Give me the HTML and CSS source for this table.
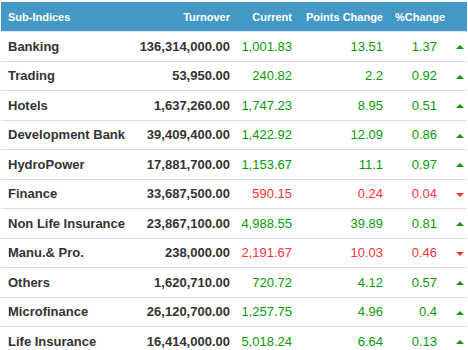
FILE: index.html
```html
<!DOCTYPE html>
<html lang="en">
<head>
    <meta charset="UTF-8">
    <meta name="viewport" content="width=device-width, initial-scale=1.0">
    <title>Sub-Indices</title>
    <link rel="stylesheet" href="styles.css">
</head>
<body>
    <table class="indices">
        <colgroup>
            <col class="col-name">
            <col class="col-turnover">
            <col class="col-current">
            <col class="col-points">
            <col class="col-pct">
            <col class="col-arrow">
        </colgroup>
        <thead>
            <tr>
                <th class="name">Sub-Indices</th>
                <th>Turnover</th>
                <th>Current</th>
                <th>Points Change</th>
                <th class="pct-head">%Change</th>
                <th></th>
            </tr>
        </thead>
        <tbody>
            <tr class="up">
                <td class="name">Banking</td><td class="turnover">136,314,000.00</td>
                <td>1,001.83</td><td>13.51</td><td>1.37</td><td class="arrow"><span></span></td>
            </tr>
            <tr class="up">
                <td class="name">Trading</td><td class="turnover">53,950.00</td>
                <td>240.82</td><td>2.2</td><td>0.92</td><td class="arrow"><span></span></td>
            </tr>
            <tr class="up">
                <td class="name">Hotels</td><td class="turnover">1,637,260.00</td>
                <td>1,747.23</td><td>8.95</td><td>0.51</td><td class="arrow"><span></span></td>
            </tr>
            <tr class="up">
                <td class="name">Development Bank</td><td class="turnover">39,409,400.00</td>
                <td>1,422.92</td><td>12.09</td><td>0.86</td><td class="arrow"><span></span></td>
            </tr>
            <tr class="up">
                <td class="name">HydroPower</td><td class="turnover">17,881,700.00</td>
                <td>1,153.67</td><td>11.1</td><td>0.97</td><td class="arrow"><span></span></td>
            </tr>
            <tr class="down">
                <td class="name">Finance</td><td class="turnover">33,687,500.00</td>
                <td>590.15</td><td>0.24</td><td>0.04</td><td class="arrow"><span></span></td>
            </tr>
            <tr class="up">
                <td class="name">Non Life Insurance</td><td class="turnover">23,867,100.00</td>
                <td>4,988.55</td><td>39.89</td><td>0.81</td><td class="arrow"><span></span></td>
            </tr>
            <tr class="down">
                <td class="name">Manu.&amp; Pro.</td><td class="turnover">238,000.00</td>
                <td>2,191.67</td><td>10.03</td><td>0.46</td><td class="arrow"><span></span></td>
            </tr>
            <tr class="up">
                <td class="name">Others</td><td class="turnover">1,620,710.00</td>
                <td>720.72</td><td>4.12</td><td>0.57</td><td class="arrow"><span></span></td>
            </tr>
            <tr class="up">
                <td class="name">Microfinance</td><td class="turnover">26,120,700.00</td>
                <td>1,257.75</td><td>4.96</td><td>0.4</td><td class="arrow"><span></span></td>
            </tr>
            <tr class="up">
                <td class="name">Life Insurance</td><td class="turnover">16,414,000.00</td>
                <td>5,018.24</td><td>6.64</td><td>0.13</td><td class="arrow"><span></span></td>
            </tr>
        </tbody>
    </table>
</body>
</html>
```

FILE: styles.css
```css
body {
    margin: 0;
    background-color: #fff;
    font-family: "Liberation Sans", Arial, sans-serif;
}

.indices {
    width: 466px;
    margin: 2px 1px 0;
    border-collapse: collapse;
    table-layout: fixed;
    font-size: 13px;
}

.col-name { width: 129px; }
.col-turnover { width: 104px; }
.col-current { width: 62px; }
.col-points { width: 91px; }
.col-pct { width: 54px; }
.col-arrow { width: 26px; }

.indices th {
    height: 29px;
    padding: 0 4px;
    background-color: #4498c6;
    color: #fff;
    font-size: 11px;
    font-weight: bold;
    text-align: right;
    white-space: nowrap;
    border-bottom: 1px solid #dde8ef;
}

.indices th.name {
    text-align: left;
    padding-left: 7px;
}

.indices th.pct-head {
    text-align: left;
    padding-left: 8px;
    overflow: visible;
}

.indices td {
    height: 29.5px;
    box-sizing: border-box;
    padding: 0 4px;
    text-align: right;
    white-space: nowrap;
    border-bottom: 1px solid #ddd;
}

.indices td.name {
    text-align: left;
    padding-left: 7px;
    color: #333;
    font-weight: bold;
}

.indices td.turnover {
    color: #333;
    font-weight: bold;
}

.up td { color: #0a9a0a; }
.down td { color: #ff3333; }

.indices td.arrow {
    text-align: left;
    padding-left: 15px;
}

.arrow span {
    display: inline-block;
    width: 0;
    height: 0;
    border-left: 4px solid transparent;
    border-right: 4px solid transparent;
    vertical-align: middle;
}

.up .arrow span {
    border-bottom: 4px solid #0a9a0a;
}

.down .arrow span {
    border-top: 4px solid #ff3333;
}
```
